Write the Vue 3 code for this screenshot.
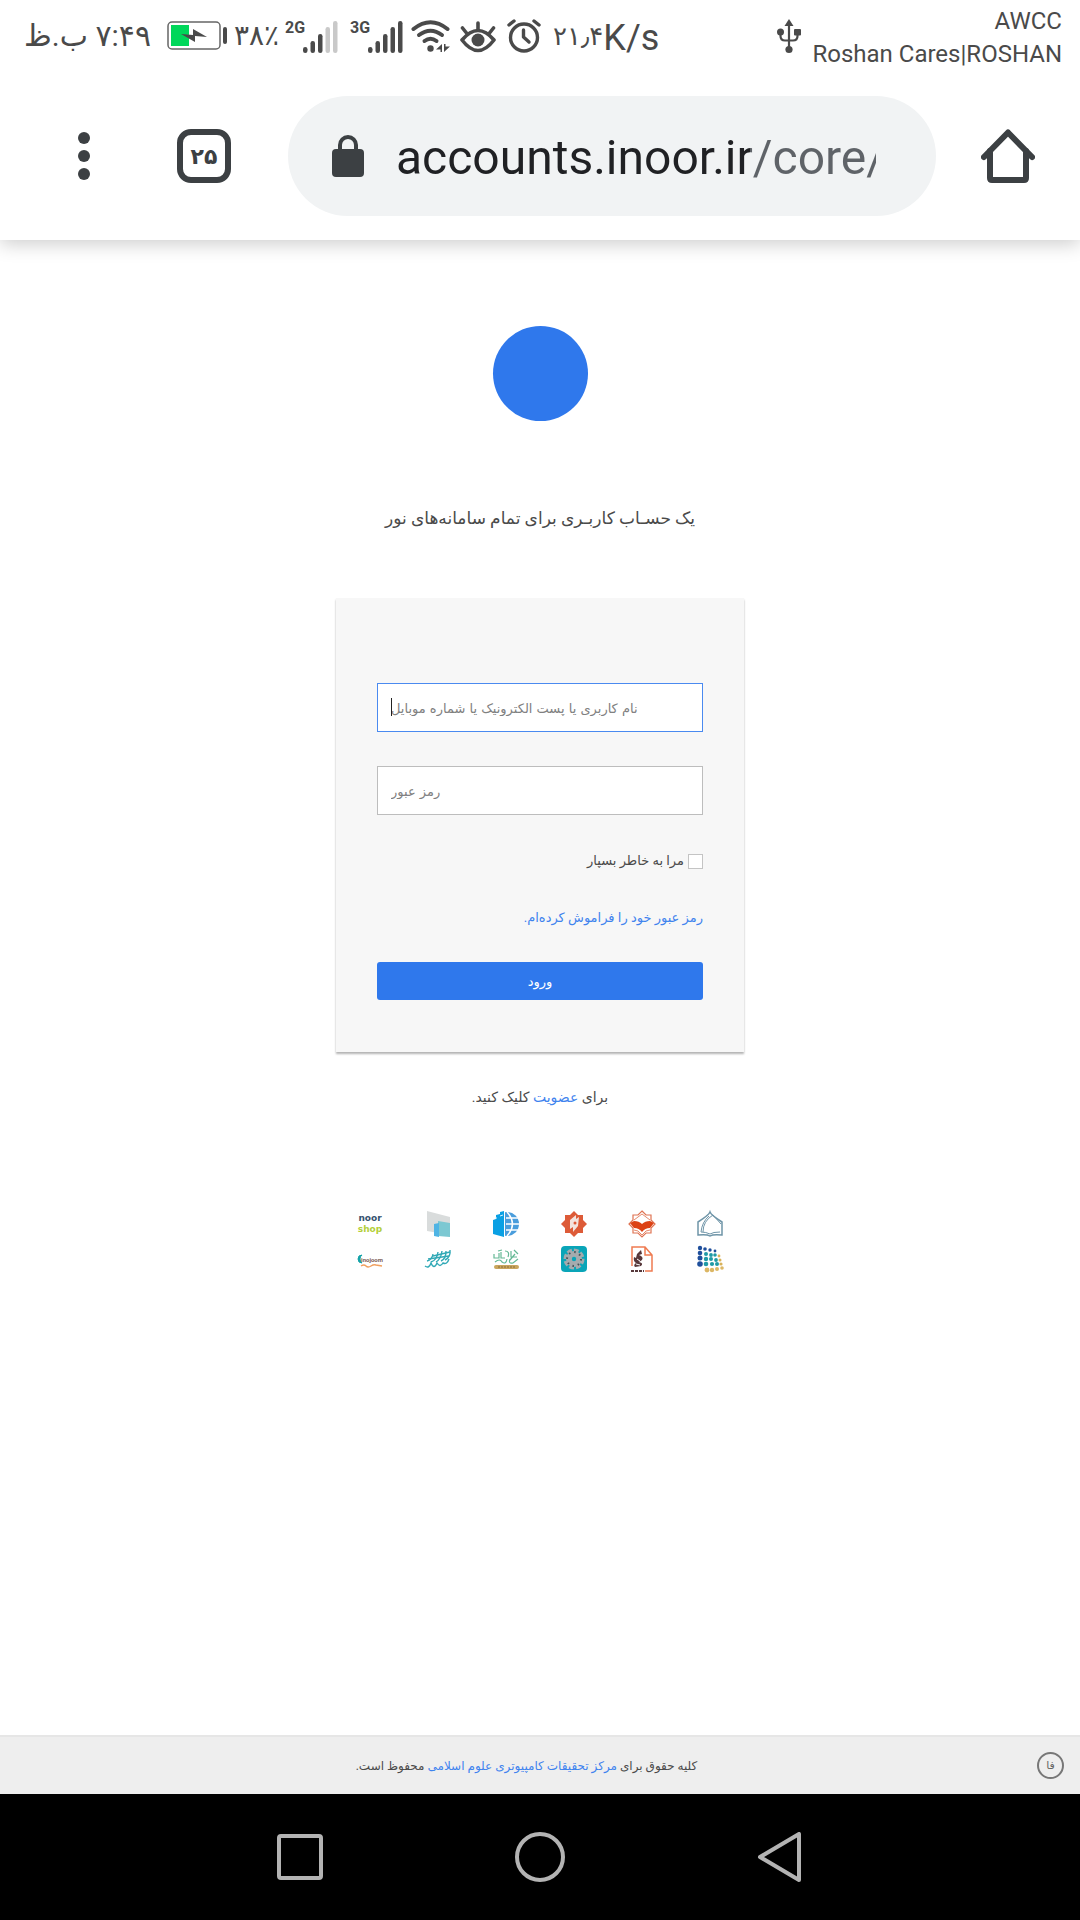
<script setup>
import { ref } from 'vue'

const url = ref('accounts.inoor.ir/core/')
const username = ref('')
const password = ref('')
const remember = ref(false)

const bars = [6, 12, 19, 26, 32]
const networks = [
  { label: '2G', active: 3 },
  { label: '3G', active: 5 },
]

const starPoints = '13,0 17,4 22,4 22,9 26,13 22,17 22,22 17,22 13,26 9,22 4,22 4,17 0,13 4,9 4,4 9,4'

const dots = [
  [3, 2, 2.2, '#1f4f9c'], [8, 3, 1.8, '#1f4f9c'], [13, 4, 1.7, '#1f4f9c'], [18, 5, 1.4, '#1f4f9c'],
  [3, 7, 2.3, '#1f4f9c'], [9, 8, 2, '#1f9aa6'], [14, 9, 1.9, '#1f9aa6'], [18, 9, 1.8, '#1f9aa6'], [22, 10, 1.4, '#d9b25a'],
  [3, 12, 2.5, '#1f4f9c'], [9, 13, 2.2, '#1f9aa6'], [14, 13, 2, '#1f9aa6'], [19, 14, 1.9, '#1f9aa6'], [23, 14, 1.5, '#d9b25a'],
  [3, 18, 2.8, '#1f4f9c'], [9, 18, 2.3, '#1f9aa6'], [15, 18, 2.1, '#1f9aa6'], [20, 18, 2, '#1f9aa6'], [24, 18, 1.6, '#d9b25a'],
  [10, 24, 2.4, '#dcb765'], [15, 24, 2.2, '#dcb765'], [20, 23, 2, '#dcb765'], [25, 22, 1.8, '#dcb765'],
]
</script>

<template>
  <div class="screen">
    <header class="status">
      <div class="status-start">
        <span class="clock" dir="rtl">۷:۴۹ ب.ظ</span>
        <svg class="battery" width="62" height="30" viewBox="0 0 62 30">
          <rect x="1" y="1" width="52" height="27" rx="4" fill="none" stroke="#666" stroke-width="1.5" />
          <rect x="4" y="4" width="18" height="21" fill="#00d75a" />
          <path d="M14 13 L26 14 V8 L40 16 L28 15 V21 Z" fill="#4a4a4a" />
          <rect x="56" y="6" width="4" height="17" rx="2" fill="#4a4a4a" />
        </svg>
        <span class="percent">۳۸٪</span>
        <span v-for="net in networks" :key="net.label" class="network">
          <b>{{ net.label }}</b>
          <svg width="35" height="33" viewBox="0 0 35 33">
            <rect
              v-for="(h, i) in bars"
              :key="i"
              :x="i * 7.5"
              :y="33 - h"
              width="4.5"
              :height="h"
              rx="2.2"
              :fill="i < net.active ? '#4a4a4a' : '#c9c9c9'"
            />
          </svg>
        </span>
        <svg class="wifi" width="40" height="33" viewBox="0 0 40 33" fill="none" stroke="#4a4a4a" stroke-width="4" stroke-linecap="round">
          <path d="M2.500 9 Q19.500 -4.500 36.500 9" />
          <path d="M8 15 Q19.500 6.500 31 15" />
          <path d="M13.500 21 Q19.500 16.500 25.500 21" />
          <circle cx="19.500" cy="28.500" r="3.200" fill="#4a4a4a" stroke="none" />
          <path d="M31 24 V32 H29.500 V29.500 H25 Z M33 32 V24 H34.500 V26.500 H39 Z" fill="#4a4a4a" stroke="none" />
        </svg>
        <svg class="eye" width="36" height="33" viewBox="0 0 36 33" fill="none" stroke="#4a4a4a" stroke-linecap="round">
          <path d="M2 20 Q18 1 34 20 Q18 41 2 20 Z" stroke-width="3.600" stroke-linejoin="round" />
          <circle cx="18" cy="20" r="6.500" fill="#4a4a4a" stroke="none" />
          <path d="M18 3 V9 M2.500 8 L6.500 13 M33.500 8 L29.500 13" stroke-width="3.600" />
        </svg>
        <svg class="alarm" width="34" height="34" viewBox="0 0 34 34" fill="none" stroke="#4a4a4a" stroke-linecap="round">
          <circle cx="17" cy="18.500" r="13.500" stroke-width="3.400" />
          <path d="M2 6 L7 2 M32 6 L27 2" stroke-width="3.400" />
          <path d="M16.500 11 V18 L22 23" stroke-width="3.400" stroke-linejoin="round" />
        </svg>
        <span class="speed"><span>۲۱٫۴</span><span class="unit">K/s</span></span>
      </div>
      <div class="status-end">
        <svg class="usb" width="24" height="35" viewBox="0 0 24 35" fill="#4a4a4a">
          <path d="M12 0 L16.500 7 H7.500 Z" />
          <path d="M12 5 V30 M3.500 13 V17 Q3.500 21.500 8 21.500 H16 Q20.500 21.500 20.500 17 V13" fill="none" stroke="#4a4a4a" stroke-width="2.200" />
          <circle cx="3.500" cy="13" r="3.500" />
          <rect x="17" y="10" width="7" height="6.500" rx="1" />
          <circle cx="12" cy="30.500" r="3.600" />
        </svg>
        <div class="carrier">
          <span>AWCC</span>
          <span>Roshan Cares|ROSHAN</span>
        </div>
      </div>
    </header>

    <nav class="toolbar" aria-label="مرورگر">
      <button class="tool" type="button" aria-label="منو">
        <svg width="54" height="54" viewBox="0 0 54 54" fill="#3c4043">
          <circle cx="27" cy="9" r="6" /><circle cx="27" cy="27" r="6" /><circle cx="27" cy="45" r="6" />
        </svg>
      </button>
      <button class="tool tabs" type="button" aria-label="زبانه‌ها">۲۵</button>
      <label class="address">
        <svg width="32" height="42" viewBox="0 0 32 42">
          <path d="M8 16 V10 A8 8 0 0 1 24 10 V16" fill="none" stroke="#3c4043" stroke-width="4" />
          <rect y="14" width="32" height="28" rx="4" fill="#3c4043" />
        </svg>
        <input v-model="url" type="text" class="url" aria-label="نشانی" dir="ltr" />
      </label>
      <button class="tool" type="button" aria-label="خانه">
        <svg width="54" height="54" viewBox="0 0 54 54" fill="none" stroke="#3c4043" stroke-linecap="round">
          <path d="M3 28 L27 3.500 L51 28" stroke-width="6" stroke-linejoin="round" />
          <path d="M9 22 V49 Q9 51 11 51 H43 Q45 51 45 49 V22" stroke-width="6" />
        </svg>
      </button>
    </nav>

    <main class="page" dir="rtl">
      <div class="logo"></div>
      <h1>یک حسـاب کاربـری برای تمام سامانه‌های نور</h1>

      <form class="card" @submit.prevent>
        <div class="field focused">
          <input v-model="username" type="text" dir="rtl" aria-label="نام کاربری" placeholder="نام کاربری یا پست الکترونیک یا شماره موبایل" />
          <i class="caret"></i>
        </div>
        <div class="field">
          <input v-model="password" type="password" dir="rtl" aria-label="رمز عبور" placeholder="رمز عبور" />
        </div>
        <label class="remember"><input v-model="remember" type="checkbox" />مرا به خاطر بسپار</label>
        <a class="forgot" href="#">رمز عبور خود را فراموش کرده‌ام.</a>
        <button class="submit" type="submit">ورود</button>
      </form>

      <p class="join">برای <a href="#">عضویت</a> کلیک کنید.</p>

      <div class="sites" dir="ltr">
        <a href="#" aria-label="noor shop">
          <svg viewBox="0 0 26 26" text-anchor="middle" font-size="9" font-weight="700" font-family="DejaVu Sans, sans-serif">
            <text x="13" y="10" fill="#35526f">noor</text>
            <text x="13" y="21" fill="#b4cf3a">shop</text>
          </svg>
        </a>
        <a href="#">
          <svg viewBox="0 0 26 26">
            <path d="M2 0 L25 6 V24 L2 20 Z" fill="#d9dcdc" />
            <path d="M13 10 L25 12 V26 L13 25 Z" fill="#7cc8d2" />
            <path d="M9 13 L14 12 V26 L9 25 Z" fill="#4fb4e4" />
          </svg>
        </a>
        <a href="#">
          <svg viewBox="0 0 26 26">
            <circle cx="14" cy="13" r="12" fill="#4a9ddc" />
            <path d="M13 7 H26 M13 13 H26 M13 19 H26 M14 1 Q25 13 14 25" stroke="#fff" stroke-width="1.500" fill="none" />
            <path d="M0 9 L3 8 V4 L7 3 V1 L11 0 V26 L0 23 Z" fill="#0aa0e4" />
            <path d="M3 8 V6 M7 5 L10 4" stroke="#d8f0fb" fill="none" />
            <path d="M11.500 1 V25" stroke="#fff" />
          </svg>
        </a>
        <a href="#">
          <svg viewBox="0 0 26 26">
            <polygon :points="starPoints" fill="#dd5b38" />
            <path d="M9 9 L15 4 V8 L18 6 L17 15 L12 21 V16 L9 18 Z" fill="#f3e4df" />
            <circle cx="14" cy="12" r="1.500" fill="#dd5b38" />
          </svg>
        </a>
        <a href="#">
          <svg viewBox="0 0 26 26">
            <polygon :points="starPoints" fill="#fff" stroke="#df7352" stroke-width="1.200" />
            <path d="M5 9 L9 6 L13 3 L17 6 L21 9 M5 19 L9 20 L13 24 L17 20 L21 19" fill="none" stroke="#e58a6d" />
            <path d="M1 12 L5 10 Q10 10 13 13 Q16 10 21 10 L25 12 L21 17 Q16 17 13 21 Q10 17 5 17 Z" fill="#dc4215" />
          </svg>
        </a>
        <a href="#">
          <svg viewBox="0 0 26 26" fill="none" stroke="#6f95a8" stroke-width="1.500">
            <path d="M13 1 Q14 4 25 11 V24 Q16 23 13 25 Q10 23 1 24 V11 Q12 4 13 1 Z" />
            <path d="M16 4 Q6 10 6 21 M12 5 Q5 11 4 21 M16 4 L24 13 M23 21 Q16 21 13 23 Q9 21 4 21" stroke-width="1" />
          </svg>
        </a>
        <a href="#" aria-label="inojoom">
          <svg viewBox="0 0 26 26">
            <path d="M5 9 A4 4 0 1 0 5 17 A5 5 0 0 1 5 9 Z" fill="#14a3a8" stroke="#14a3a8" />
            <text x="15" y="16" text-anchor="middle" font-size="6" font-weight="700" font-family="Roboto, sans-serif" fill="#7b5d55">inojoom</text>
            <path d="M4 20 Q7 18 9 20 T14 20 T19 19 L25 20" stroke="#f0a060" stroke-width="1.500" fill="none" />
          </svg>
        </a>
        <a href="#">
          <svg viewBox="0 0 26 26" fill="none" stroke="#31a9b6" stroke-width="1.400">
            <path d="M2 15 Q7 14 8 8 M6 16 Q12 14 13 6 M11 16 Q16 13 17 5 M16 15 Q21 13 21 5 M20 14 Q26 11 25 4" />
            <path d="M0 20 Q4 23 6 17 Q9 24 12 17 Q15 22 18 17 Q22 19 24 13 M8 10 L25 6 M3 13 L24 10" />
          </svg>
        </a>
        <a href="#">
          <svg viewBox="0 0 26 26" fill="none" stroke="#63b894" stroke-width="1.200">
            <path d="M1 8 V12 H6 V7 M8 6 V12 H12 M12 5 Q17 5 15 11 M18 5 V11 H24 M21 4 L25 8 M2 16 Q7 12 9 16 Q13 19 14 13 M17 13 Q15 18 20 17 L25 13 M5 5 L9 4 M22 8 L17 14" />
            <rect x="1" y="19" width="25" height="4" rx="2" fill="#c9a55c" stroke="none" />
            <path d="M5 21 H22" stroke="#856c3c" stroke-dasharray="2 1" />
          </svg>
        </a>
        <a href="#">
          <svg viewBox="0 0 26 26">
            <rect width="26" height="26" rx="4" fill="#0aa5b8" />
            <circle cx="13" cy="13" r="8" fill="#a5abae" />
            <circle cx="13" cy="13" r="9" fill="none" stroke="#a5abae" stroke-width="3" stroke-dasharray="5 2" />
            <circle cx="13" cy="13" r="7" fill="none" stroke="#465257" stroke-width="2" stroke-dasharray="1.500 4" />
            <circle cx="13" cy="13" r="2.200" fill="#0aa5b8" />
          </svg>
        </a>
        <a href="#">
          <svg viewBox="0 0 26 26" fill="none">
            <path d="M3 20 V1 H16 L23 9 V25 H16 M16 1 V9 H23" stroke="#ef7b51" stroke-width="1.500" />
            <path d="M8 8 L12 4 L13 8 L10 9 Q15 11 13 14 L10 16 Q15 17 12 20 L6 21 Q4 19 7 17 Q4 15 5 11 L7 12 Z" fill="#57383b" />
            <path d="M8 13 L11 15 M7 18 L11 19" stroke="#fff" />
            <path d="M2 25 H15" stroke="#57383b" stroke-width="2" stroke-dasharray="3 1" />
          </svg>
        </a>
        <a href="#">
          <svg viewBox="0 0 26 26">
            <circle v-for="([x, y, r, fill], i) in dots" :key="i" :cx="x" :cy="y" :r="r" :fill="fill" />
          </svg>
        </a>
      </div>
    </main>

    <footer class="footer" dir="rtl">
      <button class="lang" type="button">فا</button>
      <p>کلیه حقوق برای <a href="#">مرکز تحقیقات کامپیوتری علوم اسلامی</a> محفوظ است.</p>
    </footer>

    <nav class="system" aria-label="ناوبری">
      <button type="button" aria-label="برنامه‌ها">
        <svg viewBox="0 0 50 50"><rect x="4" y="4" width="42" height="42" rx="2" /></svg>
      </button>
      <button type="button" aria-label="خانه">
        <svg viewBox="0 0 50 50"><circle cx="25" cy="25" r="23" /></svg>
      </button>
      <button type="button" aria-label="بازگشت">
        <svg viewBox="0 0 50 50"><path d="M44 2 V48 L5 25 Z" stroke-linejoin="round" /></svg>
      </button>
    </nav>
  </div>
</template>

<style>
body {
  margin: 0;
  background: #fff;
}
</style>

<style scoped>
.screen {
  display: flex;
  flex-direction: column;
  min-height: 100vh;
  font-family: Roboto, "DejaVu Sans", sans-serif;
  color: #4a4a4a;
}
* { box-sizing: border-box; }
button { padding: 0; border: 0; background: none; font-family: inherit; }
svg { display: block; flex: none; }
a { color: #3f83ee; text-decoration: none; }

.status {
  position: relative;
  z-index: 1;
  display: flex;
  justify-content: space-between;
  height: 72px;
  padding: 0 18px 0 25px;
  background: #fff;
  color: #4a4a4a;
}
.status-start { display: flex; align-items: center; }
.clock {
  display: flex;
  width: 126px;
  font-size: 30px;
  line-height: 36px;
  white-space: nowrap;
}
.battery { margin-left: 16px; }
.percent { width: 46px; margin-left: 5px; font-size: 28px; line-height: 36px; white-space: nowrap; }
.network { display: flex; margin-left: 5px; }
.network + .network { margin-left: 12px; }
.network b { width: 18px; font: 700 16px/16px Roboto, sans-serif; white-space: nowrap; }
.wifi { margin-left: 8px; }
.eye { margin-left: 9px; }
.alarm { margin-left: 11px; }
.speed {
  display: flex;
  align-items: center;
  margin-left: 12px;
  font-size: 26px;
  line-height: 36px;
  white-space: nowrap;
}
.unit { padding-top: 4px; font-size: 36px; }
.status-end { display: flex; align-items: center; gap: 11px; }
.carrier {
  display: flex;
  flex-direction: column;
  align-items: flex-end;
  padding-top: 4px;
  font-size: 24px;
  line-height: 33px;
  white-space: nowrap;
}

.toolbar {
  display: flex;
  align-items: center;
  height: 168px;
  padding: 0 45px 0 57px;
  background: #fff;
  box-shadow: 0 4px 18px rgba(0, 0, 0, 0.2);
}
.tool { flex: none; width: 54px; height: 54px; }
.tabs {
  margin: 0 57px 0 66px;
  border: 6px solid #3c4043;
  border-radius: 14px;
  color: #3c4043;
  font-size: 22px;
  font-weight: 700;
}
.address {
  display: flex;
  flex: 1;
  align-items: center;
  gap: 32px;
  min-width: 0;
  height: 120px;
  margin-right: 45px;
  padding: 0 60px 0 44px;
  border-radius: 60px;
  background: #f1f3f4;
}
.url {
  flex: 1;
  min-width: 0;
  height: 64px;
  padding: 2px 0 0;
  border: 0;
  outline: 0;
  background: linear-gradient(90deg, #202124 354px, #5f6368 354px);
  background-clip: text;
  color: transparent;
  font: 48px/60px Roboto, sans-serif;
}

.page {
  display: flex;
  flex: 1;
  flex-direction: column;
  align-items: center;
  padding: 86px 16px 40px;
}
.logo { width: 95px; height: 95px; border-radius: 50%; background: #2f78ec; }
h1 {
  margin: 81px 0 0;
  font-size: 17px;
  font-weight: 400;
  line-height: 32px;
}
.card {
  display: flex;
  flex-direction: column;
  width: 100%;
  max-width: 408px;
  margin-top: 64px;
  padding: 85px 41px 52px;
  background: #f7f7f7;
  box-shadow: 0 2px 2px rgba(0, 0, 0, 0.3);
}
.field { position: relative; margin-bottom: 34px; }
.field input {
  display: block;
  width: 100%;
  height: 49px;
  padding: 2px 13px 0;
  border: 1px solid #bdbdbd;
  border-radius: 0;
  outline: 0;
  background: #fff;
  font: 13px "DejaVu Sans", sans-serif;
  text-align: left;
}
.field input::placeholder { color: #808080; opacity: 1; }
.focused input { border-color: #4a8af0; }
.caret { position: absolute; left: 14px; top: 15px; width: 1px; height: 18px; background: #222; }
.remember {
  display: flex;
  align-items: center;
  gap: 4px;
  margin-top: 2px;
  font-size: 13px;
  line-height: 20px;
}
.remember input {
  appearance: none;
  width: 15px;
  height: 15px;
  margin: 0;
  border: 1px solid #c4c4c4;
  background: #fff;
}
.forgot { align-self: flex-start; margin: 37px 0 34px; font-size: 13px; line-height: 20px; }
.submit {
  height: 38px;
  border-radius: 3px;
  background: #2f78ec;
  color: #fff;
  font-size: 13px;
}
.join { margin: 35px 0 0; font-size: 14px; line-height: 20px; }
.sites {
  display: grid;
  grid-template-columns: repeat(6, 28px);
  gap: 9px 40px;
  margin-top: 104px;
}
.sites svg { width: 28px; height: 26px; overflow: visible; }

.footer {
  display: flex;
  align-items: center;
  height: 59px;
  padding: 0 16px;
  border-top: 2px solid #e6e6e6;
  background: #eee;
}
.footer p { flex: 1; margin: 0; font-size: 12px; line-height: 20px; text-align: center; }
.lang {
  width: 27px;
  height: 27px;
  border: 2px solid #777;
  border-radius: 50%;
  color: #666;
  font-size: 11px;
}

.system {
  display: flex;
  align-items: center;
  justify-content: center;
  gap: 190px;
  height: 126px;
  background: #000;
}
.system svg { width: 50px; height: 50px; fill: none; stroke: #b3b3b3; stroke-width: 4; }
</style>
